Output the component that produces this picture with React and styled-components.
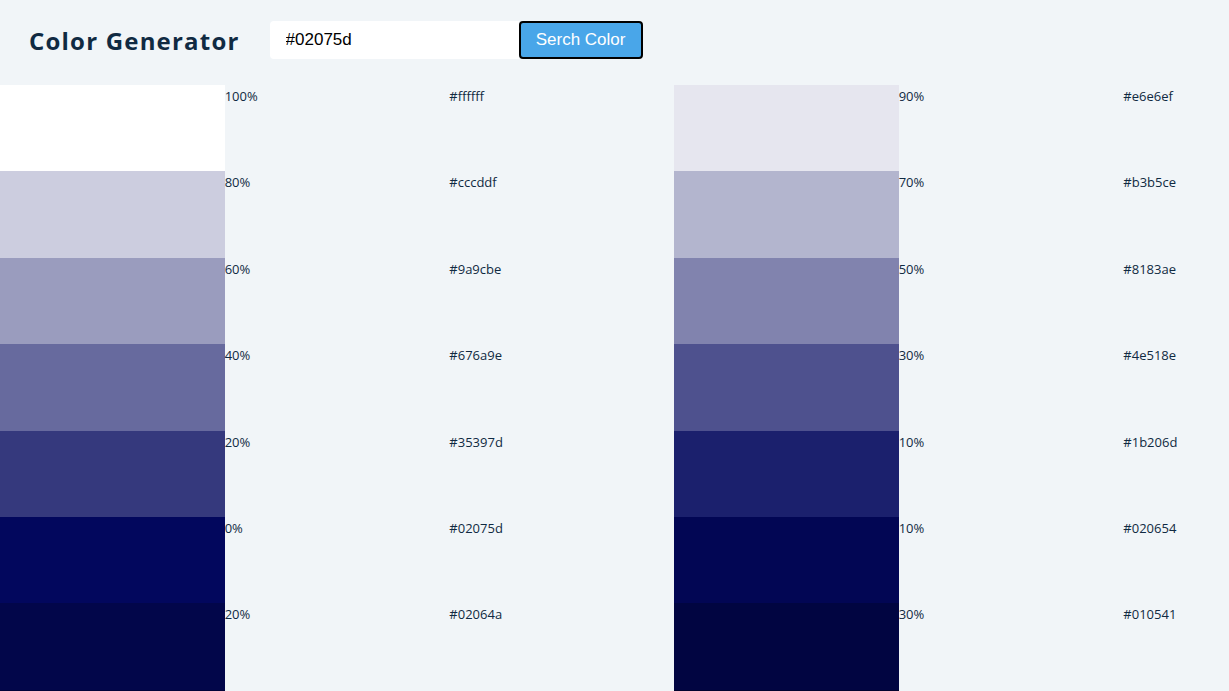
import React, { useState } from 'react';
import styled, { createGlobalStyle } from 'styled-components';

const GlobalStyle = createGlobalStyle`
  body {
    margin: 0;
    background: #f1f5f8;
    font-family: "Open Sans", "Noto Sans", sans-serif;
    color: #102a42;
    overflow-x: hidden;
  }
`;

const colors = [
  ['100%', '#ffffff'], ['90%', '#e6e6ef'], ['80%', '#cccddf'], ['70%', '#b3b5ce'],
  ['60%', '#9a9cbe'], ['50%', '#8183ae'], ['40%', '#676a9e'], ['30%', '#4e518e'],
  ['20%', '#35397d'], ['10%', '#1b206d'], ['0%', '#02075d'], ['10%', '#020654'],
  ['20%', '#02064a'], ['30%', '#010541'], ['40%', '#010438'], ['50%', '#01042f'],
  ['60%', '#010325'], ['70%', '#01021c'], ['80%', '#000213'], ['90%', '#000109'],
  ['100%', '#000000'],
];

const App = () => {
  const [color, setColor] = useState('#02075d');

  return (
    <>
      <GlobalStyle />
      <Header>
        <Title>Color Generator</Title>
        <Form onSubmit={(e) => e.preventDefault()}>
          <Input value={color} onChange={(e) => setColor(e.target.value)} />
          <Button type="submit">Serch Color</Button>
        </Form>
      </Header>
      <Colors>
        {colors.map(([weight, hex], index) => (
          <Item key={index}>
            <Swatch $bg={hex} />
            <Label>{weight}</Label>
            <Label>{hex}</Label>
          </Item>
        ))}
      </Colors>
    </>
  );
};

const Header = styled.section`
  display: flex;
  align-items: center;
  gap: 30px;
  padding: 21px 0 26px 29px;
`;

const Title = styled.h3`
  margin: 0;
  font-size: 24px;
  font-weight: 700;
  letter-spacing: 1.2px;
  color: #102a42;
`;

const Form = styled.form`
  display: flex;
`;

const Input = styled.input`
  width: 249px;
  height: 38px;
  box-sizing: border-box;
  border: none;
  border-radius: 4px 0 0 4px;
  padding: 0 16px;
  font-family: "Liberation Sans", Arial, sans-serif;
  font-size: 17px;
  color: #000;
  background: #fff;
  outline: none;
`;

const Button = styled.button`
  width: 124px;
  height: 38px;
  box-sizing: border-box;
  border: 2px solid #000;
  border-radius: 4px;
  background: #49a6e9;
  color: #fff;
  font-family: "Liberation Sans", Arial, sans-serif;
  font-size: 17px;
  cursor: pointer;
`;

const Colors = styled.section`
  display: grid;
  grid-template-columns: repeat(2, 674px);
  grid-auto-rows: 86.4px;
`;

const Item = styled.article`
  display: grid;
  grid-template-columns: repeat(3, 224.67px);
`;

const Swatch = styled.div`
  background: ${(p) => p.$bg};
`;

const Label = styled.p`
  margin: 0;
  padding-top: 2px;
  font-size: 13px;
  color: #102a42;
`;

export default App;
